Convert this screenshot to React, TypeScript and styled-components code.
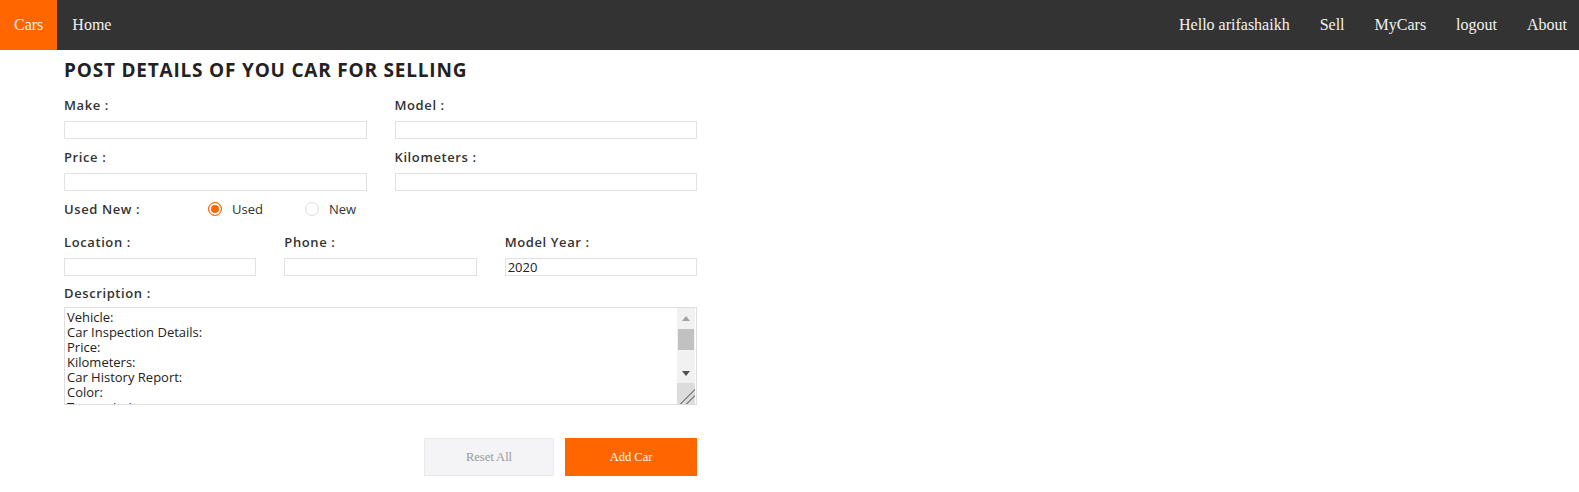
import styled, { createGlobalStyle } from "styled-components";

const GlobalStyle = createGlobalStyle`
    body {
        margin: 0;
        background: #fff;
        font-family: "Liberation Serif", "Times New Roman", serif;
    }
`;

const NavBar = styled.nav`
    display: flex;
    justify-content: space-between;
    height: 50px;
    background: #333333;
`;

const NavGroup = styled.div`
    display: flex;
    align-items: stretch;
    padding-right: ${(p: { $end?: boolean }) => (p.$end ? "12px" : "0")};
`;

const NavLink = styled.a<{ $brand?: boolean }>`
    display: flex;
    align-items: center;
    padding: ${(p) => (p.$brand ? "0 14px 1px 14px" : "0 15px 1px")};
    color: #f2f2f2;
    font-size: 16px;
    text-decoration: none;
    background: ${(p) => (p.$brand ? "#ff6600" : "transparent")};

    &:last-child {
        padding-right: ${(p) => (p.$brand ? "14px" : "0")};
    }
`;

const Form = styled.form`
    width: 633px;
    margin: 0 0 0 64px;
    font-family: "Open Sans", "Noto Sans", sans-serif;
`;

const Title = styled.h2`
    margin: 9px 0 16px;
    font-size: 19px;
    line-height: 22px;
    font-weight: 700;
    color: #222;
    letter-spacing: 0.8px;
`;

const Grid = styled.div<{ $cols: number }>`
    display: grid;
    grid-template-columns: repeat(${(p) => p.$cols}, 1fr);
    column-gap: 28px;
    row-gap: 10px;
`;

const Field = styled.div<{ $top?: number }>`
    display: flex;
    flex-direction: column;
    margin-top: ${(p) => p.$top ?? 0}px;
`;

const Label = styled.label<{ $gap?: number }>`
    font-size: 13px;
    line-height: 16px;
    font-weight: 600;
    color: #333;
    letter-spacing: 0.6px;
    margin-bottom: ${(p) => p.$gap ?? 8}px;
`;

const TextInput = styled.input`
    box-sizing: border-box;
    height: 18px;
    width: 100%;
    border: 1px solid #e2e2e2;
    padding: 0 2px;
    font-family: inherit;
    font-size: 13px;
    color: #222;
    outline: none;
`;

const RadioRow = styled.div`
    display: flex;
    align-items: center;
    height: 20px;
    margin: 8px 0 15px;
`;

const RadioLabel = styled.span`
    width: 144px;
    font-size: 13px;
    font-weight: 600;
    color: #333;
    letter-spacing: 0.6px;
`;

const Option = styled.label`
    display: flex;
    align-items: center;
    width: 97px;
    font-size: 13px;
    color: #333;
`;

const Radio = styled.input`
    appearance: none;
    box-sizing: border-box;
    width: 14px;
    height: 14px;
    margin: 0 10px 0 0;
    border-radius: 50%;
    border: 1px solid #dcdcdc;
    background: #fff;

    &:checked {
        border: 1px solid #ff6600;
        background: #ff6600;
        box-shadow: inset 0 0 0 2px #fff;
    }
`;

const DescBox = styled.div`
    box-sizing: border-box;
    display: flex;
    height: 98px;
    border: 1px solid #dedede;
    padding-right: 1px;
`;

const Description = styled.textarea`
    flex: 1;
    border: none;
    padding: 2px 2px;
    font-family: inherit;
    font-size: 13px;
    line-height: 15px;
    color: #222;
    outline: none;
    resize: none;
    overflow: hidden;
`;

const ScrollBar = styled.div`
    display: flex;
    flex-direction: column;
    width: 18px;
    background: #f1f1f1;
`;

const ScrollArrow = styled.div<{ $down?: boolean }>`
    display: flex;
    align-items: center;
    justify-content: center;
    height: 20px;

    &::before {
        content: "";
        border-left: 4px solid transparent;
        border-right: 4px solid transparent;
        border-top: ${(p) => (p.$down ? "5px solid #505050" : "none")};
        border-bottom: ${(p) => (p.$down ? "none" : "5px solid #a3a3a3")};
    }
`;

const ScrollThumb = styled.div`
    height: 21px;
    margin: 1px 1px 0;
    background: #c1c1c1;
`;

const ScrollTrack = styled.div`
    flex: 1;
`;

const Resizer = styled.div`
    height: 21px;
    background: linear-gradient(
        135deg,
        #dcdcdc 60%,
        #8a8a8a 60%,
        #8a8a8a 65%,
        #dcdcdc 65%,
        #dcdcdc 76%,
        #8a8a8a 76%,
        #8a8a8a 81%,
        #dcdcdc 81%
    );
`;

const Actions = styled.div`
    display: flex;
    justify-content: flex-end;
    gap: 11px;
    margin-top: 33px;
`;

const Button = styled.button<{ $primary?: boolean }>`
    box-sizing: border-box;
    width: ${(p) => (p.$primary ? "132px" : "130px")};
    height: 38px;
    border: ${(p) => (p.$primary ? "none" : "1px solid #ebe9f0")};
    font-family: "Liberation Serif", "Times New Roman", serif;
    font-size: 12.5px;
    background: ${(p) => (p.$primary ? "#ff6600" : "#f4f3f6")};
    color: ${(p) => (p.$primary ? "#fff" : "#9a9a9a")};
`;

const descText = `Vehicle:
Car Inspection Details:
Price:
Kilometers:
Car History Report:
Color:
Transmission:
Fuel Type:`;

export default function App() {
    return (
        <>
            <GlobalStyle />
            <NavBar>
                <NavGroup>
                    <NavLink $brand>Cars</NavLink>
                    <NavLink>Home</NavLink>
                </NavGroup>
                <NavGroup $end>
                    <NavLink>Hello arifashaikh</NavLink>
                    <NavLink>Sell</NavLink>
                    <NavLink>MyCars</NavLink>
                    <NavLink>logout</NavLink>
                    <NavLink>About</NavLink>
                </NavGroup>
            </NavBar>
            <Form onSubmit={(e) => e.preventDefault()}>
                <Title>POST DETAILS OF YOU CAR FOR SELLING</Title>
                <Grid $cols={2}>
                    <Field>
                        <Label>Make :</Label>
                        <TextInput />
                    </Field>
                    <Field>
                        <Label>Model :</Label>
                        <TextInput />
                    </Field>
                    <Field>
                        <Label>Price :</Label>
                        <TextInput />
                    </Field>
                    <Field>
                        <Label>Kilometers :</Label>
                        <TextInput />
                    </Field>
                </Grid>
                <RadioRow>
                    <RadioLabel>Used New :</RadioLabel>
                    <Option>
                        <Radio type="radio" name="cond" defaultChecked />
                        Used
                    </Option>
                    <Option>
                        <Radio type="radio" name="cond" />
                        New
                    </Option>
                </RadioRow>
                <Grid $cols={3}>
                    <Field>
                        <Label>Location :</Label>
                        <TextInput />
                    </Field>
                    <Field>
                        <Label>Phone :</Label>
                        <TextInput />
                    </Field>
                    <Field>
                        <Label>Model Year :</Label>
                        <TextInput defaultValue="2020" />
                    </Field>
                </Grid>
                <Field $top={9}>
                    <Label $gap={6}>Description :</Label>
                    <DescBox>
                        <Description defaultValue={descText} />
                        <ScrollBar>
                            <ScrollArrow />
                            <ScrollThumb />
                            <ScrollTrack />
                            <ScrollArrow $down />
                            <Resizer />
                        </ScrollBar>
                    </DescBox>
                </Field>
                <Actions>
                    <Button type="reset">Reset All</Button>
                    <Button $primary type="submit">Add Car</Button>
                </Actions>
            </Form>
        </>
    );
}
